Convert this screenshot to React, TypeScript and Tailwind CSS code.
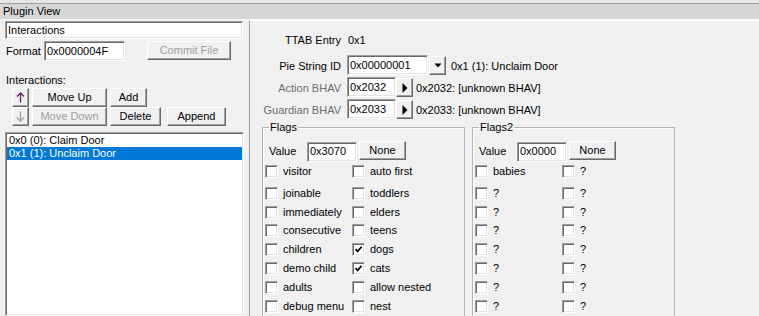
import React from "react";

const raised =
  "bg-[#f0f0f0] border border-t-white border-l-white border-b-[#696969] border-r-[#696969] shadow-[inset_-1px_-1px_0_#a0a0a0]";
const sunken =
  "bg-white border border-t-[#a0a0a0] border-l-[#a0a0a0] border-b-white border-r-white shadow-[inset_1px_1px_0_#696969,inset_-1px_-1px_0_#e3e3e3]";

function Button({ children, disabled, className = "" }: { children: React.ReactNode; disabled?: boolean; className?: string }) {
  return (
    <div className={`${raised} flex items-center justify-center leading-none ${disabled ? "text-[#a0a0a0]" : "text-black"} ${className}`}>
      {children}
    </div>
  );
}

function TextBox({ value, className = "" }: { value: string; className?: string }) {
  return <div className={`${sunken} flex items-center pl-[2px] leading-none text-black ${className}`}>{value}</div>;
}

function Check({ label, checked }: { label: string; checked?: boolean }) {
  return (
    <div className="flex items-center h-[13px]">
      <div className={`${sunken} w-[13px] h-[13px] shrink-0 flex items-center justify-center`}>
        {checked && (
          <svg width="9" height="9" viewBox="0 0 9 9">
            <path d="M1.5 4.2 L3.6 6.4 L7.6 1.8" fill="none" stroke="#000" strokeWidth="1.7" />
          </svg>
        )}
      </div>
      <span className="ml-[5px] whitespace-nowrap leading-[13px]">{label}</span>
    </div>
  );
}

const rowHeights = ["h-[22px]", "h-[19px]", "h-[18px]", "h-[19px]", "h-[19px]", "h-[19px]", "h-[19px]", "h-[19px]"];

function FlagGroup({ title, value, rows }: { title: string; value: string; rows: [string, boolean, string, boolean][] }) {
  return (
    <fieldset className="w-[203px] border border-[#b4b4b4] shadow-[inset_1px_1px_0_#fff] h-[200px]">
      <legend className="ml-[6px] px-[1px] leading-[13px]">{title}</legend>
      <div className="flex items-center mt-[7px] h-[21px]">
        <span className="ml-[6px] w-[38px]">Value</span>
        <TextBox value={value} className="w-[50px] h-[20px]" />
        <Button className="ml-[2px] w-[47px] h-[19px] self-start">None</Button>
      </div>
      {rows.map(([a, ac, b, bc], i) => (
        <div key={i} className={`flex pt-[3px] pl-[2px] ${rowHeights[i]}`}>
          <div className="w-[87px]">
            <Check label={a} checked={ac} />
          </div>
          <Check label={b} checked={bc} />
        </div>
      ))}
    </fieldset>
  );
}

const flags: [string, boolean, string, boolean][] = [
  ["visitor", false, "auto first", false],
  ["joinable", false, "toddlers", false],
  ["immediately", false, "elders", false],
  ["consecutive", false, "teens", false],
  ["children", false, "dogs", true],
  ["demo child", false, "cats", true],
  ["adults", false, "allow nested", false],
  ["debug menu", false, "nest", false],
];

const flags2: [string, boolean, string, boolean][] = [
  ["babies", false, "?", false],
  ["?", false, "?", false],
  ["?", false, "?", false],
  ["?", false, "?", false],
  ["?", false, "?", false],
  ["?", false, "?", false],
  ["?", false, "?", false],
  ["?", false, "?", false],
];

function DownGlyph() {
  return (
    <svg width="8" height="5" viewBox="0 0 8 5">
      <path d="M0.5 0.5 H7.5 L4 4.5 Z" fill="#000" />
    </svg>
  );
}

function RightGlyph() {
  return (
    <svg width="6" height="10" viewBox="0 0 6 10">
      <path d="M0.5 0 V10 L5.5 5 Z" fill="#000" />
    </svg>
  );
}

function ArrowGlyph({ up, color }: { up?: boolean; color: string }) {
  return (
    <svg width="9" height="11" viewBox="0 0 9 11">
      <g transform={up ? undefined : "rotate(180 4.5 5.5)"} fill="none" stroke={color} strokeWidth="1.3">
        <path d="M4.5 1 V10.5" />
        <path d="M1 4.5 L4.5 1 L8 4.5" />
      </g>
    </svg>
  );
}

export default function App() {
  return (
    <div className="w-[759px] h-[316px] overflow-hidden bg-[#f0f0f0] flex flex-col font-['Liberation_Sans',Arial,sans-serif] text-[11px] text-black">
      {/* window chrome strip */}
      <div className="h-[3px] bg-[#e6e6e6] shrink-0" />
      <div className="h-[1px] bg-[#a0a0a0] shrink-0" />
      <div className="h-[15px] bg-[#d6d6d6] flex items-center pl-[3px] shrink-0 leading-none">Plugin View</div>
      <div className="h-[1px] bg-[#f8f8f8] shrink-0" />

      <div className="flex flex-1 min-h-0">
        {/* left panel */}
        <div className="w-[249px] shrink-0 flex flex-col">
          <TextBox value="Interactions" className="ml-[5px] mt-[1px] w-[238px] h-[18px]" />
          <div className="flex items-start mt-[2px] h-[20px]">
            <span className="ml-[6px] mt-[2px] w-[38px]">Format</span>
            <TextBox value="0x0000004F" className="w-[81px] h-[20px]" />
            <Button disabled className="ml-[22px] w-[84px] h-[19px]">Commit File</Button>
          </div>
          <div className="ml-[6px] mt-[13px] h-[14px] leading-[13px]">Interactions:</div>
          <div className="flex ml-[12px] h-[19px]">
            <Button className="w-[17px] h-[19px]">
              <ArrowGlyph up color="#6a1b6a" />
            </Button>
            <Button className="ml-[3px] w-[75px] h-[19px]">Move Up</Button>
            <Button className="ml-[3px] w-[37px] h-[19px]">Add</Button>
          </div>
          <div className="flex ml-[12px] h-[19px]">
            <Button disabled className="w-[17px] h-[19px]">
              <ArrowGlyph color="#a0a0a0" />
            </Button>
            <Button disabled className="ml-[3px] w-[75px] h-[19px]">Move Down</Button>
            <Button className="ml-[3px] w-[51px] h-[19px]">Delete</Button>
            <Button className="ml-[6px] w-[59px] h-[19px]">Append</Button>
          </div>
          <div className={`${sunken} ml-[5px] mt-[6px] w-[239px] flex-1 pt-[1px] px-[1px]`}>
            <div className="h-[13px] leading-[13px] pl-[2px]">0x0 (0): Claim Door</div>
            <div className="h-[13px] leading-[13px] pl-[2px] bg-[#0078d7] text-white">0x1 (1): Unclaim Door</div>
          </div>
        </div>

        {/* right panel */}
        <div className="flex-1 border-l border-l-[#a0a0a0] border-t border-t-white flex flex-col">
          <div className="ml-[52px] w-[49px] h-[3px] border-l-2 border-r-2 border-[#a0a0a0]" />
          <div className="flex items-center mt-[13px] h-[13px]">
            <span className="w-[91px] text-right">TTAB Entry</span>
            <span className="ml-[7px]">0x1</span>
          </div>
          <div className="flex items-start mt-[8px] h-[20px]">
            <span className="w-[91px] text-right mt-[3px]">Pie String ID</span>
            <TextBox value="0x00000001" className="ml-[6px] w-[81px] h-[20px]" />
            <Button className="ml-[1px] mt-[1px] w-[17px] h-[19px]">
              <DownGlyph />
            </Button>
            <span className="ml-[5px] mt-[3px]">0x1 (1): Unclaim Door</span>
          </div>
          <div className="flex items-start mt-[2px] h-[20px]">
            <span className="w-[91px] text-right mt-[3px] text-[#6d6d6d]">Action BHAV</span>
            <TextBox value="0x2032" className="ml-[6px] w-[49px] h-[20px]" />
            <Button className="mt-[1px] w-[17px] h-[19px]">
              <RightGlyph />
            </Button>
            <span className="ml-[3px] mt-[3px]">0x2032: [unknown BHAV]</span>
          </div>
          <div className="flex items-start mt-[2px] h-[20px]">
            <span className="w-[91px] text-right mt-[3px] text-[#6d6d6d]">Guardian BHAV</span>
            <TextBox value="0x2033" className="ml-[6px] w-[49px] h-[20px]" />
            <Button className="mt-[1px] w-[17px] h-[19px]">
              <RightGlyph />
            </Button>
            <span className="ml-[3px] mt-[3px]">0x2033: [unknown BHAV]</span>
          </div>
          <div className="flex mt-[2px] ml-[12px] gap-[7px]">
            <FlagGroup title="Flags" value="0x3070" rows={flags} />
            <FlagGroup title="Flags2" value="0x0000" rows={flags2} />
          </div>
        </div>
      </div>
    </div>
  );
}
